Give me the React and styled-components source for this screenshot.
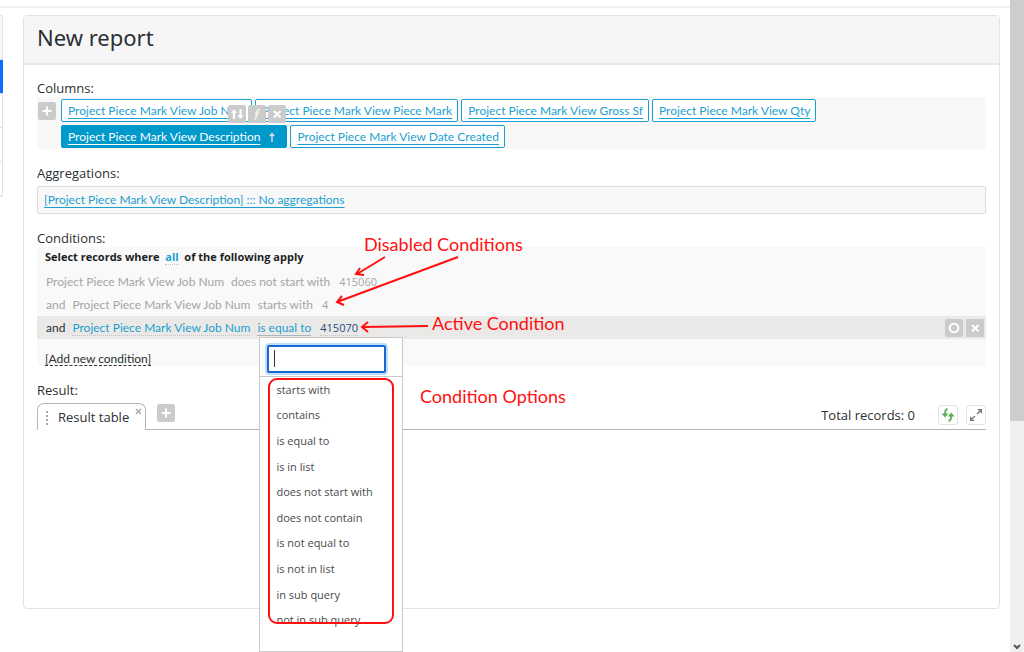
import React from 'react';
import styled, { createGlobalStyle, css } from 'styled-components';

const GlobalStyle = createGlobalStyle`
	* {
		box-sizing: border-box;
	}
	body {
		margin: 0;
		background: #fff;
		color: #2b2f33;
		font-family: "Open Sans", "Noto Sans", sans-serif;
		font-size: 13px;
	}
	button, input {
		font: inherit;
		margin: 0;
	}
`;

const blue = '#1a9fd0';
const red = '#ff1010';
const formFont = 'Lato, "Noto Sans", sans-serif';

const Page = styled.div`
	position: relative;
	display: flex;
	height: 100vh;
	overflow: hidden;
`;
const Content = styled.div`
	flex: 1;
	min-width: 0;
	padding-top: 6px;
`;
const TopLine = styled.div`
	height: 2px;
	margin-bottom: 7px;
	background: #f0f0f0;
`;
const Columns = styled.div`
	display: flex;
	align-items: flex-start;
	padding-right: 10px;
`;
const Sidebar = styled.nav`
	width: 3px;
	margin-right: 20px;
	border: 1px solid #e2e2e2;
	border-left: 0;
	border-radius: 0 4px 4px 0;
`;
const SidebarItem = styled.div`
	height: ${props => props.head ? '44px' : '34px'};
	margin-right: ${props => props.active ? '-1px' : '0'};
	border-bottom: 1px solid #e2e2e2;
	background: ${props => props.active ? '#0d6efd' : props.head ? '#f6f6f6' : '#fff'};
	:last-child {
		border-bottom: 0;
	}
`;
const Panel = styled.main`
	flex: 1;
	min-width: 0;
	border: 1px solid #e3e3e3;
	border-radius: 4px;
`;
const PanelHeader = styled.header`
	padding: 5px 13px 10px;
	border-bottom: 2px solid #e9e9e9;
	background: #f6f6f6;
`;
const Title = styled.h1`
	margin: 0;
	font-size: 22px;
	line-height: 32px;
	font-weight: 400;
	font-family: "Noto Sans", sans-serif;
`;
const PanelBody = styled.div`
	padding: 14px 13px 0;
`;
const Section = styled.section`
	margin-bottom: ${props => props.gap || '15px'};
`;
const Label = styled.h2`
	margin: 0;
	font-size: 13px;
	line-height: 18px;
	font-weight: 400;
`;

const IconButton = styled.button`
	display: flex;
	align-items: center;
	justify-content: center;
	flex: none;
	width: 18px;
	height: 18px;
	padding: 0;
	border: 0;
	border-radius: 2px;
	background: #cbcbcb;
	color: #fff;
`;
const ColumnBox = styled.div`
	display: flex;
	gap: 5px;
	padding: 2px 0 1px 1px;
	background: #f8f8f8;
`;
const AddColumn = styled(IconButton)`
	margin-top: 3px;
`;
const Chips = styled.div`
	display: flex;
	flex-wrap: wrap;
	gap: 3px;
`;
const Chip = styled.div`
	position: relative;
	display: flex;
	align-items: center;
	height: 23px;
	padding: 0 5px 0 6px;
	border: 1px solid ${blue};
	border-radius: 2px;
	background: #fff;
	${props => props.active && css`
		border-color: #0099cc;
		background: #0099cc;
	`}
`;
const FieldLink = styled.a`
	color: ${props => props.light ? '#fff' : blue};
	font-family: ${formFont};
	font-size: 12px;
	line-height: 14px;
	text-decoration: underline;
	text-underline-offset: 3px;
	white-space: nowrap;
`;
const SortArrow = styled.svg`
	margin: 0 6px 0 9px;
`;
const ChipTools = styled.div`
	position: absolute;
	top: -21px;
	right: 0;
	z-index: 1;
	display: flex;
	gap: 2px;
`;

const AggregationBox = styled.div`
	display: flex;
	align-items: center;
	height: 28px;
	margin-top: 4px;
	padding: 0 6px;
	border: 1px solid #dcdcdc;
	border-radius: 2px;
	background: #f8f8f8;
`;

const ConditionBox = styled.div`
	background: #f9f9f9;
	font-family: ${formFont};
	font-size: 12px;
`;
const ConditionHead = styled.div`
	padding: 0 8px;
	font-family: "Open Sans", sans-serif;
	font-size: 11px;
	font-weight: 700;
	line-height: 20px;
	color: #1b1e21;
	white-space: pre;
`;
const ConditionRow = styled.div`
	display: flex;
	align-items: center;
	gap: 7px;
	height: 23px;
	padding: 0 2px 0 9px;
	color: #a5a5a5;
	white-space: nowrap;
	${props => props.active && css`
		background: #eae9e8;
		color: #2b2f33;
	`}
`;
const Conditions = styled.div`
	padding-top: 3px;
`;
const Operand = styled.button`
	padding: 1px 0 0;
	border: 0;
	border-bottom: 1px ${props => props.open ? 'solid #a9b7bd' : 'dotted #c4c4c4'};
	background: none;
	color: ${props => props.color || blue};
	line-height: 14px;
`;
const Value = styled.span`
	padding-left: 2px;
	font-family: "Open Sans", sans-serif;
	font-size: 11px;
`;
const Anchor = styled.div`
	position: relative;
`;
const RowTools = styled.div`
	display: flex;
	gap: 3px;
	margin-left: auto;
`;
const AddCondition = styled.button`
	margin: 13px 8px 0;
	padding: 0;
	border: 0;
	border-bottom: 1px dashed #333;
	background: none;
	color: #2b2f33;
	line-height: 13px;
	display: block;
`;

const Menu = styled.div`
	position: absolute;
	top: 17px;
	left: 2px;
	z-index: 2;
	width: 144px;
	padding-bottom: 18px;
	border: 1px solid #c9c9c9;
	background: #fff;
`;
const SearchBox = styled.div`
	position: relative;
	padding: 7px 16px 3px 7px;
	border-bottom: 1px solid #c9c9c9;
`;
const Search = styled.input`
	display: block;
	width: 100%;
	height: 28px;
	padding: 0 6px;
	border: 2px solid #1967d2;
	border-radius: 2px;
	outline: 0;
	box-shadow: 0 0 0 2px #bfe0fb;
	caret-color: transparent;
`;
const Caret = styled.span`
	position: absolute;
	top: 12px;
	left: 14px;
	width: 1px;
	height: 17px;
	background: #333;
`;
const Options = styled.ul`
	display: grid;
	grid-template-rows: repeat(10, 1fr);
	height: 256px;
	margin: 0;
	padding: 0;
	list-style: none;
`;
const Option = styled.li`
	display: flex;
	align-items: center;
	padding: 0 16px;
	color: #4a4a4a;
	font-family: "Open Sans", sans-serif;
	font-size: 11px;
`;

const TabBar = styled.div`
	display: flex;
	align-items: flex-end;
	height: 31px;
`;
const Tab = styled.div`
	display: flex;
	align-items: flex-start;
	height: 27px;
	padding: 4px 3px 0 7px;
	border: 1px solid #b5b5b5;
	border-bottom: 0;
	border-radius: 7px 7px 0 0;
`;
const TabName = styled.button`
	margin: 0 6px 0 9px;
	padding: 0;
	border: 0;
	background: none;
	color: inherit;
	line-height: 19px;
	white-space: nowrap;
`;
const TabClose = styled.button`
	display: flex;
	padding: 0;
	border: 0;
	background: none;
	color: #aaa;
`;
const Grip = styled.svg`
	margin-top: 3px;
`;
const TabRest = styled.div`
	flex: 1;
	display: flex;
	align-items: center;
	height: 30px;
	padding-left: 11px;
	border-bottom: 1px solid #b5b5b5;
`;
const AddTab = styled(IconButton)`
	margin-bottom: 3px;
`;
const Total = styled.span`
	margin-left: auto;
	margin-right: 15px;
`;
const ToolButton = styled.button`
	display: flex;
	align-items: center;
	justify-content: center;
	width: 20px;
	height: 20px;
	margin-left: 8px;
	padding: 0;
	border: 1px solid #e4e4e4;
	border-radius: 3px;
	background: #fff;
`;
const ResultArea = styled.div`
	min-height: 178px;
`;

const Scrollbar = styled.div`
	display: flex;
	flex-direction: column;
	width: 14px;
	background: #f0f0f0;
`;
const Thumb = styled.div`
	flex: 421;
	background: #cdcdcd;
`;
const Track = styled.div`
	flex: 231;
	display: flex;
	align-items: flex-end;
	justify-content: center;
`;

const Notes = styled.div`
	position: absolute;
	inset: 0;
	z-index: 3;
	pointer-events: none;
`;
const Note = styled.span`
	position: absolute;
	left: ${props => props.x}px;
	top: ${props => props.y}px;
	color: ${red};
	font-family: Lato, sans-serif;
	font-size: 18px;
	line-height: 22px;
	white-space: nowrap;
`;
const NoteFrame = styled.div`
	position: absolute;
	left: 268px;
	top: 378px;
	width: 126px;
	height: 246px;
	border: 2px solid ${red};
	border-radius: 9px;
`;
const Arrows = styled.svg`
	position: absolute;
	left: 0;
	top: 0;
`;

const PlusIcon = () => (
	<svg width='18' height='18' fill='none' stroke='#fff' strokeWidth='2'>
		<path d='M9 4.5v9M4.5 9h9' />
	</svg>
);

const CrossIcon = () => (
	<svg width='18' height='18' fill='none' stroke='#fff' strokeWidth='2'>
		<path d='M6 6l6.5 6.5M12.5 6L6 12.5' />
	</svg>
);

const SwapIcon = () => (
	<svg width='18' height='18' fill='none' stroke='#fff' strokeWidth='2'>
		<path d='M6 14V5.500M12.500 4v8.500' />
		<path d='M3 8l3-4 3 4zM9.500 10l3 4 3-4z' fill='#fff' stroke='none' />
	</svg>
);

const FunctionIcon = () => (
	<svg width='18' height='18' fill='none' stroke='#f4f2e4' strokeWidth='1.600'>
		<path d='M12 5c-2-.8-2.700.3-3.100 2.500L8 12.500c-.2 1-.7 1.500-1.700 1.300M7 8.200h4' />
	</svg>
);

const CircleIcon = () => (
	<svg width='18' height='18' fill='none' stroke='#fff' strokeWidth='2'>
		<circle cx='9' cy='9' r='4.300' />
	</svg>
);

const RefreshIcon = () => (
	<svg width='14' height='14' fill='none' stroke='#5cb060' strokeWidth='2'>
		<path d='M6.500 1C4.500 1.500 4 3.500 4.200 6M7.500 13C9.800 12.500 10.300 10.500 10.200 8' />
		<path d='M.5 5.500h7L4 9.500zM6.700 8.500h7L10.200 4.500z' fill='#5cb060' stroke='none' />
	</svg>
);

const ExpandIcon = () => (
	<svg width='14' height='14' fill='none' stroke='#777' strokeWidth='1.300'>
		<path d='M8 6l4-4M8.700 1.700h3.600v3.600M6 8l-4 4M1.700 8.700v3.600h3.600' />
	</svg>
);

const chips = [
	'Project Piece Mark View Job Num',
	'Project Piece Mark View Piece Mark',
	'Project Piece Mark View Gross Sf',
	'Project Piece Mark View Qty',
	'Project Piece Mark View Description',
	'Project Piece Mark View Date Created',
];

const options = [
	'starts with',
	'contains',
	'is equal to',
	'is in list',
	'does not start with',
	'does not contain',
	'is not equal to',
	'is not in list',
	'in sub query',
	'not in sub query',
];

const ColumnChip = ({ name, active }) => (
	<Chip active={active}>
		<FieldLink href='#' light={active}>{name}</FieldLink>
		{active ? (
			<>
				<SortArrow width='6' height='10' fill='none' stroke='#dcdcdc' strokeWidth='1.500'>
					<path d='M3 10V1.500M.7 4L3 1.500 5.300 4' />
				</SortArrow>
				<ChipTools>
					<IconButton aria-label='Sort'><SwapIcon /></IconButton>
					<IconButton aria-label='Function'><FunctionIcon /></IconButton>
					<IconButton aria-label='Remove column'><CrossIcon /></IconButton>
				</ChipTools>
			</>
		) : null}
	</Chip>
);

const OperatorMenu = () => (
	<Menu>
		<SearchBox>
			<Search aria-label='Search conditions' />
			<Caret />
		</SearchBox>
		<Options>
			{options.map(option => <Option key={option}>{option}</Option>)}
		</Options>
	</Menu>
);

const Annotations = () => (
	<Notes>
		<Arrows width='600' height='400' fill='none' stroke={red} strokeWidth='2'>
			<path d='M385 257L357 274M360 268l-4 6 8 1' />
			<path d='M458 257L337 302M342 296l-5 6 7 3' />
			<path d='M428 326L363 327M368 322l-6 5 6 5' />
		</Arrows>
		<Note x={364} y={233}>Disabled Conditions</Note>
		<Note x={432} y={312}>Active Condition</Note>
		<Note x={420} y={385}>Condition Options</Note>
		<NoteFrame />
	</Notes>
);

export default () => (
	<Page>
		<GlobalStyle />
		<Content>
			<TopLine />
			<Columns>
				<Sidebar>
					<SidebarItem head />
					<SidebarItem active />
					<SidebarItem />
					<SidebarItem />
					<SidebarItem />
				</Sidebar>
				<Panel>
					<PanelHeader>
						<Title>New report</Title>
					</PanelHeader>
					<PanelBody>
						<Section>
							<Label>Columns:</Label>
							<ColumnBox>
								<AddColumn aria-label='Add column'><PlusIcon /></AddColumn>
								<Chips>
									{chips.map((name, i) => <ColumnChip key={name} name={name} active={i === 4} />)}
								</Chips>
							</ColumnBox>
						</Section>
						<Section>
							<Label>Aggregations:</Label>
							<AggregationBox>
								<FieldLink href='#'>[Project Piece Mark View Description] ::: No aggregations</FieldLink>
							</AggregationBox>
						</Section>
						<Section>
							<Label>Conditions:</Label>
							<ConditionBox>
								<ConditionHead>
									{'Select records where  '}
									<Operand>all</Operand>
									{'  of the following apply'}
								</ConditionHead>
								<Conditions>
									<ConditionRow>
										<span>Project Piece Mark View Job Num</span>
										<span>does not start with</span>
										<Value>415060</Value>
									</ConditionRow>
									<ConditionRow>
										<span>and</span>
										<span>Project Piece Mark View Job Num</span>
										<span>starts with</span>
										<Value>4</Value>
									</ConditionRow>
									<ConditionRow active>
										<span>and</span>
										<Operand>Project Piece Mark View Job Num</Operand>
										<Anchor>
											<Operand open>is equal to</Operand>
											<OperatorMenu />
										</Anchor>
										<Value><Operand color='#1d4f7c'>415070</Operand></Value>
										<RowTools>
											<IconButton aria-label='Disable condition'><CircleIcon /></IconButton>
											<IconButton aria-label='Remove condition'><CrossIcon /></IconButton>
										</RowTools>
									</ConditionRow>
								</Conditions>
								<AddCondition>[Add new condition]</AddCondition>
							</ConditionBox>
						</Section>
						<Section gap='0'>
							<Label>Result:</Label>
							<TabBar>
								<Tab>
									<Grip width='4' height='14' fill='#aaa'>
										<path d='M1 0h2v2H1zM1 4h2v2H1zM1 8h2v2H1zM1 12h2v2H1z' />
									</Grip>
									<TabName>Result table</TabName>
									<TabClose aria-label='Close tab'>
										<svg width='7' height='7' fill='none' stroke='#aaa' strokeWidth='1.500'>
											<path d='M1 1l5 5M6 1L1 6' />
										</svg>
									</TabClose>
								</Tab>
								<TabRest>
									<AddTab aria-label='Add tab'><PlusIcon /></AddTab>
									<Total>Total records: 0</Total>
									<ToolButton aria-label='Refresh'><RefreshIcon /></ToolButton>
									<ToolButton aria-label='Expand'><ExpandIcon /></ToolButton>
								</TabRest>
							</TabBar>
							<ResultArea />
						</Section>
					</PanelBody>
				</Panel>
			</Columns>
		</Content>
		<Scrollbar>
			<Thumb />
			<Track>
				<svg width='8' height='10' fill='none' stroke='#555' strokeWidth='2'>
					<path d='M1 3l3 3 3-3' />
				</svg>
			</Track>
		</Scrollbar>
		<Annotations />
	</Page>
);
